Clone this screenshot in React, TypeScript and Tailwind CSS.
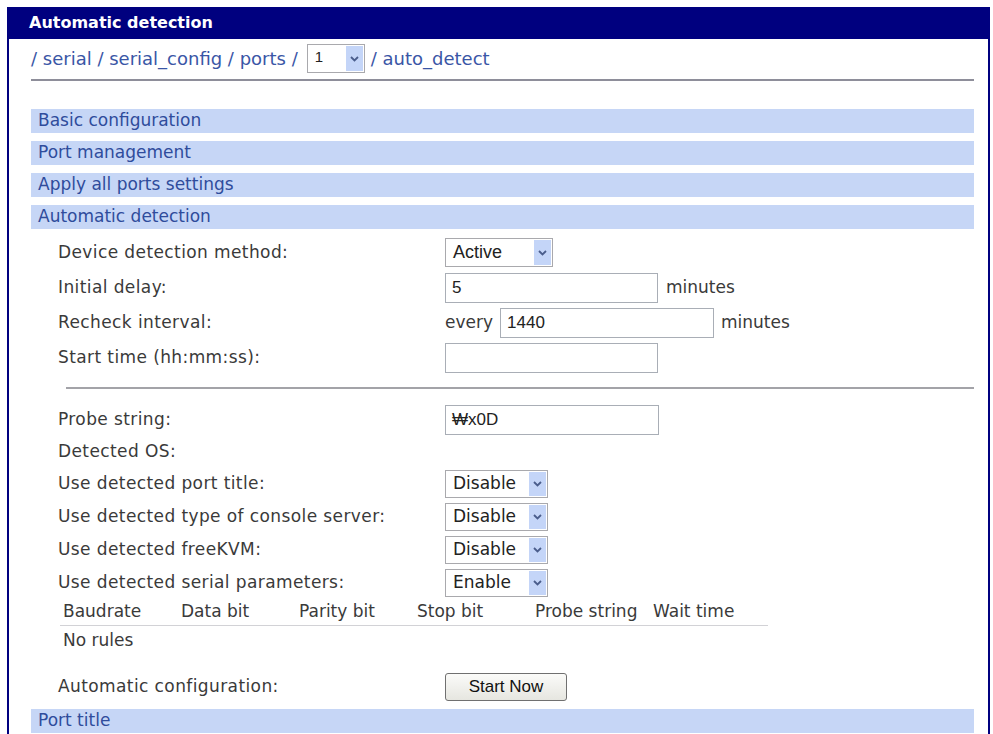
import React from "react";

const Chevron = () => (
  <svg width="9" height="6" viewBox="0 0 9 6">
    <path d="M1 1 L4.5 4.5 L8 1" fill="none" stroke="#4a5d8c" strokeWidth="1.8" />
  </svg>
);

function Select({ text, className, textClass }: { text: string; className: string; textClass: string }) {
  return (
    <div className={`flex items-stretch border border-[#a9a9ad] bg-white ${className}`}>
      <div className={`flex flex-1 items-center pl-[7px] text-[#222] ${textClass}`}>{text}</div>
      <div className="m-[1px] flex w-[17px] items-center justify-center bg-[#c4d5f8]">
        <Chevron />
      </div>
    </div>
  );
}

function Input({ value, className }: { value: string; className: string }) {
  return (
    <div
      className={`flex h-[30px] items-center border border-[#a9aeb6] bg-white pl-[6px] font-['Liberation_Sans',sans-serif] text-[17px] text-[#222] ${className}`}
    >
      {value}
    </div>
  );
}

function Bar({ text }: { text: string }) {
  return <div className="flex h-[24px] items-center bg-[#c6d6f6] pl-[7px] text-[#2f4c9c]">{text}</div>;
}

function Label({ children }: { children: React.ReactNode }) {
  return <div className="w-[387px] tracking-[0.4px]">{children}</div>;
}

export default function App() {
  return (
    <div className="h-[734px] w-[993px] overflow-hidden bg-white pl-[7px] pt-[7px] font-['DejaVu_Sans',sans-serif] text-[17px] text-[#3a3a3a]">
      <div className="w-[983px]">
        <div className="flex h-[32px] items-center bg-[#00007f] pl-[22px] text-[16px] font-bold text-white">
          Automatic detection
        </div>
        <div className="border-x-2 border-[#00007f] pb-[40px] pl-[22px] pr-[14px]">
          <div className="flex items-center border-b-2 border-[#8e8e9a] pb-[6px] pt-[5px] text-[18px] text-[#3a56a6]">
            <span>/ serial / serial_config / ports /</span>
            <Select text="1" className="ml-[9px] h-[29px] w-[58px]" textClass="pl-[5px] items-start pt-[1px] font-['Liberation_Sans',sans-serif] text-[15px]" />
            <span className="ml-[6px]">/ auto_detect</span>
          </div>

          <div className="mt-[28px] flex flex-col gap-[8px]">
            <Bar text="Basic configuration" />
            <Bar text="Port management" />
            <Bar text="Apply all ports settings" />
            <Bar text="Automatic detection" />
          </div>

          <div className="mt-[6px] flex flex-col pl-[27px]">
            <div className="flex h-[35px] items-center">
              <Label>Device detection method:</Label>
              <Select text="Active" className="h-[29px] w-[108px]" textClass="font-['Liberation_Sans',sans-serif] text-[18px]" />
            </div>
            <div className="flex h-[35px] items-center">
              <Label>Initial delay:</Label>
              <Input value="5" className="w-[213px]" />
              <span className="ml-[8px]">minutes</span>
            </div>
            <div className="flex h-[35px] items-center">
              <Label>Recheck interval:</Label>
              <span>every</span>
              <Input value="1440" className="ml-[7px] w-[214px]" />
              <span className="ml-[7px]">minutes</span>
            </div>
            <div className="flex h-[35px] items-center">
              <Label>Start time (hh:mm:ss):</Label>
              <Input value="" className="w-[213px]" />
            </div>
          </div>

          <div className="ml-[35px] mt-[12px] h-[2px] bg-[#a3a3a8]" />

          <div className="mt-[13px] flex flex-col pl-[27px]">
            <div className="flex h-[35px] items-center">
              <Label>Probe string:</Label>
              <Input value="₩x0D" className="w-[214px]" />
            </div>
            <div className="flex h-[30px] items-center">
              <Label>Detected OS:</Label>
            </div>
            <div className="flex h-[33px] items-center">
              <Label>Use detected port title:</Label>
              <Select text="Disable" className="h-[28px] w-[103px]" textClass="" />
            </div>
            <div className="flex h-[33px] items-center">
              <Label>Use detected type of console server:</Label>
              <Select text="Disable" className="h-[28px] w-[103px]" textClass="" />
            </div>
            <div className="flex h-[33px] items-center">
              <Label>Use detected freeKVM:</Label>
              <Select text="Disable" className="h-[28px] w-[103px]" textClass="" />
            </div>
            <div className="flex h-[33px] items-center">
              <Label>Use detected serial parameters:</Label>
              <Select text="Enable" className="h-[28px] w-[103px]" textClass="" />
            </div>
          </div>

          <div className="ml-[29px] w-[708px]">
            <div className="grid h-[27px] grid-cols-6 items-center border-b border-[#d2d2d6]">
              <div className="pl-[3px]">Baudrate</div>
              <div className="pl-[3px]">Data bit</div>
              <div className="pl-[3px]">Parity bit</div>
              <div className="pl-[3px]">Stop bit</div>
              <div className="pl-[3px]">Probe string</div>
              <div className="pl-[3px]">Wait time</div>
            </div>
            <div className="flex h-[30px] items-center pl-[3px]">No rules</div>
          </div>

          <div className="mt-[13px] flex h-[36px] items-center pl-[27px]">
            <Label>Automatic configuration:</Label>
            <button className="h-[28px] w-[122px] rounded-[3px] border border-[#707070] bg-gradient-to-b from-[#fbfbf9] to-[#e6e6e0] font-['Liberation_Sans',sans-serif] text-[17px] text-[#111]">
              Start Now
            </button>
          </div>

          <div className="mt-[4px]">
            <Bar text="Port title" />
          </div>
        </div>
      </div>
    </div>
  );
}
